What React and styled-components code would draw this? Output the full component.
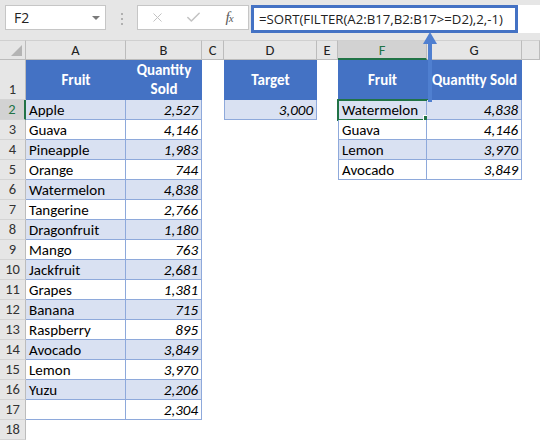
import styled, { createGlobalStyle, css } from "styled-components";
import { X, Check } from "lucide-react";

const GlobalStyle = createGlobalStyle`
  html, body {
    margin: 0;
    padding: 0;
    background: #ffffff;
  }
  * {
    box-sizing: border-box;
  }
`;

const CELL_FONT = `"Carlito", "Lato", "Liberation Sans", sans-serif`;
const UI_FONT = `"Open Sans", "Noto Sans", "Liberation Sans", sans-serif`;

const Window = styled.div`
  position: relative;
  width: 540px;
  height: 440px;
  overflow: hidden;
  background: #ffffff;
  font-family: ${CELL_FONT};
`;

const FormulaRow = styled.div`
  display: flex;
  align-items: flex-start;
  height: 40px;
  padding: 5px 0 0 5px;
  background: #e6e6e6;
`;

const NameBox = styled.div`
  display: flex;
  align-items: center;
  justify-content: space-between;
  width: 101px;
  height: 25px;
  padding: 0 5px 0 8px;
  background: #ffffff;
  border: 1px solid #c6c6c6;
  font-family: ${UI_FONT};
  font-size: 14px;
  color: #222;
`;

const DropArrow = styled.span`
  width: 0;
  height: 0;
  border-left: 4px solid transparent;
  border-right: 4px solid transparent;
  border-top: 4px solid #7a7a7a;
  margin-top: 1px;
`;

const Grip = styled.div`
  display: flex;
  flex-direction: column;
  gap: 3px;
  width: 31px;
  align-items: center;
  padding-top: 8px;
`;

const Dot = styled.span`
  width: 2px;
  height: 2px;
  background: #b0b0b0;
`;

const ButtonBox = styled.div`
  display: flex;
  align-items: center;
  width: 112px;
  height: 25px;
  background: #ffffff;
  border: 1px solid #c6c6c6;
`;

const IconSlot = styled.span`
  display: flex;
  align-items: center;
  justify-content: center;
  width: ${(p) => p.$w}px;
  color: #c3c3c3;
`;

const Fx = styled.span`
  font-family: "Liberation Serif", serif;
  font-style: italic;
  font-size: 15px;
  color: #5a5a5a;
  letter-spacing: -1px;

  small {
    font-size: 11px;
  }
`;

const FormulaInput = styled.div`
  flex: 1;
  height: 28px;
  margin-left: 2px;
  background: #ffffff;
  display: flex;
`;

const FormulaText = styled.div`
  width: 267px;
  height: 28px;
  border: 3px solid #4472c4;
  padding: 0 0 0 5px;
  display: flex;
  align-items: center;
  font-family: ${UI_FONT};
  font-size: 13.2px;
  color: #222;
  white-space: nowrap;
`;

const Sheet = styled.div`
  display: grid;
  grid-template-columns: 26px 100px 76px 22px 93px 21px 89px 95px 18px;
  grid-template-rows: 20px 40px repeat(17, 20px);
`;

const Corner = styled.div`
  position: relative;
  background: #e6e6e6;
  border-top: 1px solid #d0d0d0;
  border-right: 1px solid #bcbcbc;
  border-bottom: 1px solid #bcbcbc;

  &::after {
    content: "";
    position: absolute;
    right: 3px;
    bottom: 3px;
    width: 0;
    height: 0;
    border-left: 11px solid transparent;
    border-bottom: 11px solid #b4b4b4;
  }
`;

const ColHead = styled.div`
  display: flex;
  align-items: center;
  justify-content: center;
  background: ${(p) => (p.$selected ? "#d2d2d2" : "#e6e6e6")};
  border-top: 1px solid #d0d0d0;
  border-right: 1px solid #bcbcbc;
  border-bottom: ${(p) => (p.$selected ? "2px solid #217346" : "1px solid #bcbcbc")};
  font-size: 14.5px;
  color: ${(p) => (p.$selected ? "#217346" : "#222")};
`;

const RowHead = styled.div`
  display: flex;
  align-items: flex-end;
  justify-content: center;
  padding-bottom: 1px;
  background: ${(p) => (p.$selected ? "#d2d2d2" : "#e6e6e6")};
  border-right: ${(p) => (p.$selected ? "2px solid #217346" : "1px solid #bcbcbc")};
  border-bottom: 1px solid #d4d4d4;
  font-size: 14.5px;
  line-height: 18px;
  color: ${(p) => (p.$selected ? "#217346" : "#333")};
`;

const Cell = styled.div`
  position: relative;
  display: flex;
  align-items: center;
  padding: 0 3px;
  font-size: 15px;
  color: #000;
  white-space: nowrap;
  justify-content: ${(p) => (p.$right ? "flex-end" : "flex-start")};
  font-style: ${(p) => (p.$italic ? "italic" : "normal")};

  ${(p) =>
    p.$kind === "header" &&
    css`
      justify-content: center;
      text-align: center;
      white-space: normal;
      background: #4472c4;
      color: #ffffff;
      font-weight: 700;
      line-height: 19px;
      padding: 0 2px;
    `}

  ${(p) =>
    (p.$kind === "band" || p.$kind === "plain") &&
    css`
      background: ${p.$kind === "band" ? "#d9e1f2" : "#ffffff"};
      border-right: 1px solid #8ea9db;
      border-bottom: 1px solid #8ea9db;
    `}

  ${(p) =>
    p.$edge &&
    css`
      border-left: 1px solid #8ea9db;
    `}

  ${(p) =>
    p.$active &&
    css`
      &::before {
        content: "";
        position: absolute;
        left: -2px;
        top: -1px;
        right: -3px;
        bottom: -2px;
        border: 2px solid #217346;
        pointer-events: none;
      }
      &::after {
        content: "";
        position: absolute;
        right: -6px;
        bottom: -5px;
        width: 7px;
        height: 7px;
        background: #217346;
        border: 1px solid #ffffff;
      }
    `}
`;

const Arrow = styled.svg`
  position: absolute;
  left: 422px;
  top: 32px;
`;

const fruits = [
  ["Apple", "2,527"],
  ["Guava", "4,146"],
  ["Pineapple", "1,983"],
  ["Orange", "744"],
  ["Watermelon", "4,838"],
  ["Tangerine", "2,766"],
  ["Dragonfruit", "1,180"],
  ["Mango", "763"],
  ["Jackfruit", "2,681"],
  ["Grapes", "1,381"],
  ["Banana", "715"],
  ["Raspberry", "895"],
  ["Avocado", "3,849"],
  ["Lemon", "3,970"],
  ["Yuzu", "2,206"],
  ["", "2,304"],
];

const sorted = [
  ["Watermelon", "4,838"],
  ["Guava", "4,146"],
  ["Lemon", "3,970"],
  ["Avocado", "3,849"],
];

const columns = ["A", "B", "C", "D", "E", "F", "G", ""];

const dataRow = (i) => {
  const rowNum = i + 2;
  const band = i % 2 === 0 ? "band" : "plain";
  const [fruit, qty] = fruits[i];
  const out = sorted[i];
  return [
    <RowHead key={`h${i}`} $selected={rowNum === 2}>{rowNum}</RowHead>,
    <Cell key={`a${i}`} $kind={band}>{fruit}</Cell>,
    <Cell key={`b${i}`} $kind={band} $right $italic>{qty}</Cell>,
    <Cell key={`c${i}`} />,
    i === 0 ? (
      <Cell key={`d${i}`} $kind="band" $edge $right $italic>3,000</Cell>
    ) : (
      <Cell key={`d${i}`} />
    ),
    <Cell key={`e${i}`} />,
    out ? (
      <Cell key={`f${i}`} $kind={band} $edge $active={i === 0}>{out[0]}</Cell>
    ) : (
      <Cell key={`f${i}`} />
    ),
    out ? (
      <Cell key={`g${i}`} $kind={band} $right $italic>{out[1]}</Cell>
    ) : (
      <Cell key={`g${i}`} />
    ),
    <Cell key={`x${i}`} />,
  ];
};

export default function App() {
  return (
    <Window>
      <GlobalStyle />
      <FormulaRow>
        <NameBox>
          F2
          <DropArrow />
        </NameBox>
        <Grip>
          <Dot />
          <Dot />
          <Dot />
        </Grip>
        <ButtonBox>
          <IconSlot $w={38}>
            <X size={15} strokeWidth={1.6} />
          </IconSlot>
          <IconSlot $w={34}>
            <Check size={17} strokeWidth={2.2} />
          </IconSlot>
          <IconSlot $w={38}>
            <Fx>
              f<small>x</small>
            </Fx>
          </IconSlot>
        </ButtonBox>
        <FormulaInput>
          <FormulaText>=SORT(FILTER(A2:B17,B2:B17&gt;=D2),2,-1)</FormulaText>
        </FormulaInput>
      </FormulaRow>

      <Sheet>
        <Corner />
        {columns.map((c, i) => (
          <ColHead key={i} $selected={c === "F"}>{c}</ColHead>
        ))}

        <RowHead>1</RowHead>
        <Cell $kind="header">Fruit</Cell>
        <Cell $kind="header">Quantity Sold</Cell>
        <Cell />
        <Cell $kind="header">Target</Cell>
        <Cell />
        <Cell $kind="header">Fruit</Cell>
        <Cell $kind="header">Quantity Sold</Cell>
        <Cell />

        {fruits.map((_, i) => dataRow(i))}

        <RowHead>18</RowHead>
      </Sheet>

      <Arrow width="16" height="72" viewBox="0 0 16 72">
        <rect x="6" y="11" width="4" height="59" fill="#4f7fd0" />
        <polygon points="8,0 15,12 1,12" fill="#4f7fd0" />
      </Arrow>
    </Window>
  );
}
